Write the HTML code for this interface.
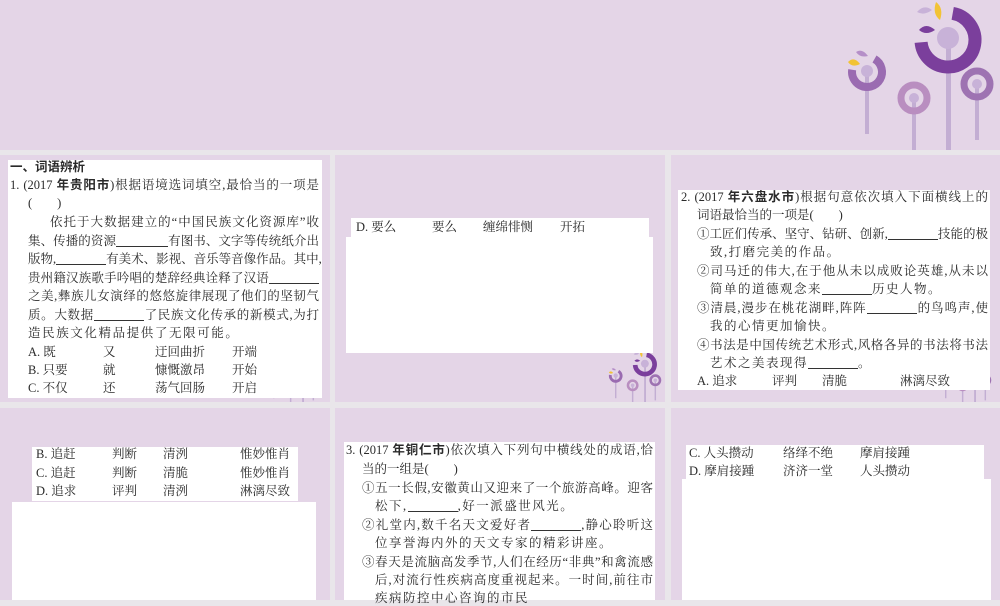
<!DOCTYPE html>
<html><head><meta charset="utf-8"><style>
*{margin:0;padding:0;box-sizing:border-box}
body{width:1000px;height:600px;background:#e9e6ea;position:relative;overflow:hidden;font-family:"Liberation Serif","Noto Serif CJK SC",serif;color:#2a2a2a}
.p{position:absolute;background:#e4d5e7}
.w{position:absolute;background:#fff}
.l{position:absolute;font-size:12.5px;line-height:16px;white-space:nowrap}
.j{text-align:justify;text-align-last:justify}
b{font-family:"Liberation Sans","Noto Sans CJK SC",sans-serif;font-weight:bold}
.u{display:inline-block;border-bottom:1px solid #333;height:12px;vertical-align:-2px}
</style></head><body>
<div class="p" style="left:0;top:0;width:1000px;height:150px"></div>
<div class="p" style="left:0;top:155px;width:330px;height:247px"></div>
<div class="p" style="left:335px;top:155px;width:330px;height:247px"></div>
<div class="p" style="left:671px;top:155px;width:329px;height:247px"></div>
<div class="p" style="left:0;top:408px;width:330px;height:192px"></div>
<div class="p" style="left:335px;top:408px;width:330px;height:192px"></div>
<div class="p" style="left:671px;top:408px;width:329px;height:192px"></div>

<svg width="0" height="0" style="position:absolute">
<defs>
<g id="fl">
<rect x="106" y="40" width="5" height="110" fill="#c3aed3"/>
<circle cx="108" cy="40" r="27" fill="none" stroke="#7b3f9c" stroke-width="13" stroke-dasharray="120 200" transform="rotate(-80 108 40)"/>
<path d="M79 30 Q86 22 95 30 Q86 36 79 30Z" fill="#7b3f9c"/>
<circle cx="108" cy="38" r="11" fill="#c8b2d8"/>
<path d="M77 12 Q84 4 92 10 Q84 16 77 12Z" fill="#c8b2d8"/>
<path d="M96 2 Q104 8 100 20 Q92 14 96 2Z" fill="#f2c335"/>
<rect x="25" y="70" width="4" height="64" fill="#c3aed3"/>
<circle cx="27" cy="72" r="15" fill="none" stroke="#9a6bb1" stroke-width="8" stroke-dasharray="65 100" transform="rotate(-60 27 72)"/>
<circle cx="27" cy="71" r="6" fill="#c8b2d8"/>
<path d="M8 62 Q14 56 20 64 Q12 68 8 62Z" fill="#f2c335"/>
<path d="M16 52 Q22 48 28 56 Q20 58 16 52Z" fill="#b58fc8"/>
<rect x="72" y="100" width="4" height="50" fill="#c3aed3"/>
<circle cx="74" cy="98" r="13" fill="none" stroke="#b98ec0" stroke-width="7"/>
<circle cx="74" cy="98" r="5" fill="#c8b2d8"/>
<rect x="135" y="86" width="4" height="54" fill="#c3aed3"/>
<circle cx="137" cy="84" r="13" fill="none" stroke="#9e73b2" stroke-width="7"/>
<circle cx="137" cy="84" r="5" fill="#c8b2d8"/>
</g></defs></svg>
<svg style="position:absolute;left:840px;top:0" width="160" height="150"><use href="#fl"/></svg>
<svg style="position:absolute;left:606px;top:350px" width="60" height="52"><g transform="scale(0.36)"><use href="#fl"/></g></svg>
<svg style="position:absolute;left:270px;top:350px" width="60" height="52"><g transform="translate(-6 0) scale(0.36)"><use href="#fl"/></g></svg>
<svg style="position:absolute;left:942px;top:350px" width="58" height="52"><g transform="translate(-6 0) scale(0.36)"><use href="#fl"/></g></svg>

<!-- Panel 1 -->
<div class="w" style="left:8px;top:160px;width:314px;height:238px"></div>
<div class="l" style="left:10px;top:159px"><b>一、词语辨析</b></div>
<div class="l j" style="left:10px;top:177px;width:309px">1. (2017 <b>年贵阳市</b>)根据语境选词填空,最恰当的一项是</div>
<div class="l" style="left:28px;top:195px">(　　)</div>
<div class="l j" style="left:50px;top:214px;width:269px">依托于大数据建立的“中国民族文化资源库”收</div>
<div class="l j" style="left:28px;top:233px;width:291px">集、传播的资源<span class="u" style="width:52px"></span>有图书、文字等传统纸介出</div>
<div class="l j" style="left:28px;top:251px;width:291px">版物,<span class="u" style="width:50px"></span>有美术、影视、音乐等音像作品。其中,</div>
<div class="l j" style="left:28px;top:270px;width:291px">贵州籍汉族歌手吟唱的楚辞经典诠释了汉语<span class="u" style="width:50px"></span></div>
<div class="l j" style="left:28px;top:288px;width:291px">之美,彝族儿女演绎的悠悠旋律展现了他们的坚韧气</div>
<div class="l j" style="left:28px;top:307px;width:291px">质。大数据<span class="u" style="width:50px"></span>了民族文化传承的新模式,为打</div>
<div class="l" style="left:28px;top:325px;letter-spacing:1.6px">造民族文化精品提供了无限可能。</div>
<div class="l" style="left:28px;top:344px">A. 既</div><div class="l" style="left:103px;top:344px">又</div><div class="l" style="left:155px;top:344px">迂回曲折</div><div class="l" style="left:232px;top:344px">开端</div>
<div class="l" style="left:28px;top:362px">B. 只要</div><div class="l" style="left:103px;top:362px">就</div><div class="l" style="left:155px;top:362px">慷慨激昂</div><div class="l" style="left:232px;top:362px">开始</div>
<div class="l" style="left:28px;top:380px">C. 不仅</div><div class="l" style="left:103px;top:380px">还</div><div class="l" style="left:155px;top:380px">荡气回肠</div><div class="l" style="left:232px;top:380px">开启</div>

<!-- Panel 2 -->
<div class="w" style="left:351px;top:218px;width:298px;height:20px"></div>
<div class="w" style="left:346px;top:237px;width:307px;height:116px"></div>
<div class="l" style="left:356px;top:219px">D. 要么</div><div class="l" style="left:432px;top:219px">要么</div><div class="l" style="left:483px;top:219px">缠绵悱恻</div><div class="l" style="left:560px;top:219px">开拓</div>

<!-- Panel 3 -->
<div class="w" style="left:678px;top:190px;width:312px;height:200px"></div>
<div class="l j" style="left:681px;top:189px;width:307px">2. (2017 <b>年六盘水市</b>)根据句意依次填入下面横线上的</div>
<div class="l" style="left:697px;top:207px">词语最恰当的一项是(　　)</div>
<div class="l j" style="left:697px;top:226px;width:291px">①工匠们传承、坚守、钻研、创新,<span class="u" style="width:50px"></span>技能的极</div>
<div class="l" style="left:710px;top:244px;letter-spacing:1.5px">致,打磨完美的作品。</div>
<div class="l j" style="left:697px;top:263px;width:291px">②司马迁的伟大,在于他从未以成败论英雄,从未以</div>
<div class="l" style="left:710px;top:281px;letter-spacing:1.5px">简单的道德观念来<span class="u" style="width:50px"></span>历史人物。</div>
<div class="l j" style="left:697px;top:300px;width:291px">③清晨,漫步在桃花湖畔,阵阵<span class="u" style="width:50px"></span>的鸟鸣声,使</div>
<div class="l" style="left:710px;top:318px;letter-spacing:1.5px">我的心情更加愉快。</div>
<div class="l j" style="left:697px;top:337px;width:291px">④书法是中国传统艺术形式,风格各异的书法将书法</div>
<div class="l" style="left:710px;top:355px;letter-spacing:1.5px">艺术之美表现得<span class="u" style="width:50px"></span>。</div>
<div class="l" style="left:697px;top:373px">A. 追求</div><div class="l" style="left:772px;top:373px">评判</div><div class="l" style="left:822px;top:373px">清脆</div><div class="l" style="left:900px;top:373px">淋漓尽致</div>

<!-- Row2 Panel 1 -->
<div class="w" style="left:32px;top:447px;width:266px;height:54px"></div>
<div class="w" style="left:12px;top:502px;width:304px;height:98px"></div>
<div class="l" style="left:36px;top:446px">B. 追赶</div><div class="l" style="left:112px;top:446px">判断</div><div class="l" style="left:163px;top:446px">清洌</div><div class="l" style="left:240px;top:446px">惟妙惟肖</div>
<div class="l" style="left:36px;top:465px">C. 追赶</div><div class="l" style="left:112px;top:465px">判断</div><div class="l" style="left:163px;top:465px">清脆</div><div class="l" style="left:240px;top:465px">惟妙惟肖</div>
<div class="l" style="left:36px;top:483px">D. 追求</div><div class="l" style="left:112px;top:483px">评判</div><div class="l" style="left:163px;top:483px">清洌</div><div class="l" style="left:240px;top:483px">淋漓尽致</div>

<!-- Row2 Panel 2 -->
<div class="w" style="left:344px;top:442px;width:311px;height:158px"></div>
<div class="l j" style="left:346px;top:442px;width:307px">3. (2017 <b>年铜仁市</b>)依次填入下列句中横线处的成语,恰</div>
<div class="l" style="left:362px;top:461px">当的一组是(　　)</div>
<div class="l j" style="left:362px;top:480px;width:291px">①五一长假,安徽黄山又迎来了一个旅游高峰。迎客</div>
<div class="l" style="left:375px;top:498px;letter-spacing:1.5px">松下,<span class="u" style="width:50px"></span>,好一派盛世风光。</div>
<div class="l j" style="left:362px;top:517px;width:291px">②礼堂内,数千名天文爱好者<span class="u" style="width:50px"></span>,静心聆听这</div>
<div class="l" style="left:375px;top:535px;letter-spacing:1.5px">位享誉海内外的天文专家的精彩讲座。</div>
<div class="l j" style="left:362px;top:554px;width:291px">③春天是流脑高发季节,人们在经历“非典”和禽流感</div>
<div class="l j" style="left:375px;top:572px;width:278px">后,对流行性疾病高度重视起来。一时间,前往市</div>
<div class="l" style="left:375px;top:590px;letter-spacing:1.5px">疾病防控中心咨询的市民</div>

<!-- Row2 Panel 3 -->
<div class="w" style="left:686px;top:445px;width:298px;height:35px"></div>
<div class="w" style="left:682px;top:479px;width:309px;height:121px"></div>
<div class="l" style="left:689px;top:445px">C. 人头攒动</div><div class="l" style="left:783px;top:445px">络绎不绝</div><div class="l" style="left:860px;top:445px">摩肩接踵</div>
<div class="l" style="left:689px;top:463px">D. 摩肩接踵</div><div class="l" style="left:783px;top:463px">济济一堂</div><div class="l" style="left:860px;top:463px">人头攒动</div>
</body></html>
